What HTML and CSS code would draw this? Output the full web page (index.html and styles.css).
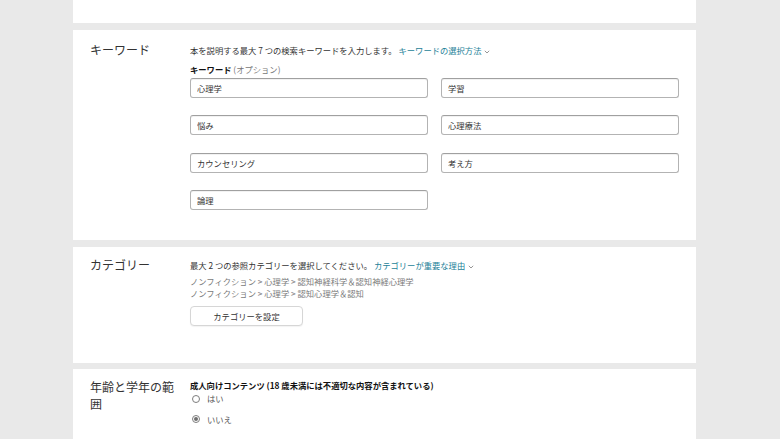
FILE: index.html
```html
<!DOCTYPE html>
<html lang="ja">
<head>
<meta charset="utf-8">
<title>キーワード</title>
<link rel="stylesheet" href="styles.css">
</head>
<body>
<div class="page">
  <section class="card card-top"></section>

  <section class="card card-keywords">
    <h2 class="label">キーワード</h2>
    <div class="content">
      <p class="desc">本を説明する最大 7 つの検索キーワードを入力します。 <a class="link" href="#">キーワードの選択方法<svg class="chev" width="6" height="4" viewBox="0 0 6 4"><path d="M0.8 0.8 L3 3 L5.2 0.8" fill="none" stroke="#8a8a8a" stroke-width="0.9"/></svg></a></p>
      <p class="field-title"><b>キーワード</b> <span class="opt">(オプション)</span></p>
      <div class="kw-grid">
        <input class="kw" type="text" value="心理学">
        <input class="kw" type="text" value="学習">
        <input class="kw" type="text" value="悩み">
        <input class="kw" type="text" value="心理療法">
        <input class="kw" type="text" value="カウンセリング">
        <input class="kw" type="text" value="考え方">
        <input class="kw" type="text" value="論理">
      </div>
    </div>
  </section>

  <section class="card card-category">
    <h2 class="label">カテゴリー</h2>
    <div class="content">
      <p class="desc">最大 2 つの参照カテゴリーを選択してください。 <a class="link" href="#">カテゴリーが重要な理由<svg class="chev" width="6" height="4" viewBox="0 0 6 4"><path d="M0.8 0.8 L3 3 L5.2 0.8" fill="none" stroke="#8a8a8a" stroke-width="0.9"/></svg></a></p>
      <div class="paths">
        <p class="path">ノンフィクション &gt; 心理学 &gt; 認知神経科学＆認知神経心理学</p>
        <p class="path">ノンフィクション &gt; 心理学 &gt; 認知心理学＆認知</p>
      </div>
      <button class="btn" type="button">カテゴリーを設定</button>
    </div>
  </section>

  <section class="card card-age">
    <h2 class="label">年齢と学年の範囲</h2>
    <div class="content">
      <p class="field-title adult"><b>成人向けコンテンツ (18 歳未満には不適切な内容が含まれている)</b></p>
      <div class="radio-row"><span class="radio"></span><span class="radio-text">はい</span></div>
      <div class="radio-row second"><span class="radio checked"></span><span class="radio-text">いいえ</span></div>
    </div>
  </section>
</div>
</body>
</html>
```

FILE: styles.css
```css
* { box-sizing: border-box; }

html, body {
  margin: 0;
  padding: 0;
  background: #e9e9e9;
  overflow: hidden;
}

body {
  font-family: "Noto Sans CJK JP", "Noto Sans", sans-serif;
  color: #333;
}

.page {
  width: 623px;
  margin-left: 73px;
  display: flex;
  flex-direction: column;
  gap: 6.5px;
}

.card {
  background: #fff;
  display: flex;
  padding-left: 17px;
  padding-right: 17px;
}

.card-top { height: 23px; }

.card-keywords {
  padding-top: 11px;
  padding-bottom: 30px;
}

.card-category {
  padding-top: 9.5px;
  padding-bottom: 37px;
}

.card-age {
  padding-top: 8.5px;
  padding-bottom: 60px;
}

.label {
  width: 90px;
  margin: 0 10px 0 0;
  flex: none;
  font-size: 12px;
  line-height: 17px;
  font-weight: normal;
  color: #333;
}

.content {
  flex: 1;
  min-width: 0;
}

p { margin: 0; }

.desc {
  font-size: 8.3px;
  line-height: 13px;
  margin-top: 3px;
  color: #333;
}

.link {
  color: #1d7f98;
  text-decoration: none;
}

.chev {
  margin-left: 3px;
  vertical-align: 0;
}

.field-title {
  font-size: 8.3px;
  line-height: 13px;
  margin-top: 6.5px;
  margin-bottom: 1.5px;
  color: #111;
}

.field-title b { font-weight: bold; }

.opt { color: #777; }

.kw-grid {
  display: grid;
  grid-template-columns: 238px 238px;
  column-gap: 13px;
  row-gap: 17.5px;
}

.kw {
  display: block;
  width: 238px;
  height: 20px;
  margin: 0;
  padding: 0 6px;
  font-family: "Noto Sans CJK JP", "Noto Sans", sans-serif;
  font-size: 8.3px;
  color: #333;
  background: #fff;
  border: 1px solid #b3b3b3;
  border-top-color: #a0a0a0;
  border-radius: 3px;
  box-shadow: inset 0 1px 0 rgba(0, 0, 0, 0.05);
  outline: none;
}

.paths {
  margin-top: 2.5px;
}

.path {
  font-size: 8.3px;
  line-height: 12px;
  color: #7a7a7a;
}

.btn {
  display: block;
  margin-top: 7px;
  width: 113px;
  height: 20px;
  padding: 0;
  font-family: "Noto Sans CJK JP", "Noto Sans", sans-serif;
  font-size: 8.3px;
  color: #333;
  background: #fff;
  border: 1px solid #d6d6d6;
  border-radius: 4px;
  box-shadow: 0 1px 1px rgba(0, 0, 0, 0.05);
}

.adult {
  margin-top: 1.5px;
  margin-bottom: 0;
}

.radio-row {
  display: flex;
  align-items: center;
  height: 13px;
  padding-left: 2px;
  gap: 7px;
  font-size: 8.3px;
  color: #555;
}

.radio-row.second { margin-top: 7.5px; }

.radio {
  width: 8px;
  height: 8px;
  border-radius: 50%;
  border: 1px solid #7d7d7d;
  background: #fff;
  flex: none;
  display: flex;
  align-items: center;
  justify-content: center;
}

.radio.checked::after {
  content: "";
  width: 4px;
  height: 4px;
  border-radius: 50%;
  background: #6e6e6e;
}

.radio-text { line-height: 13px; }
```
